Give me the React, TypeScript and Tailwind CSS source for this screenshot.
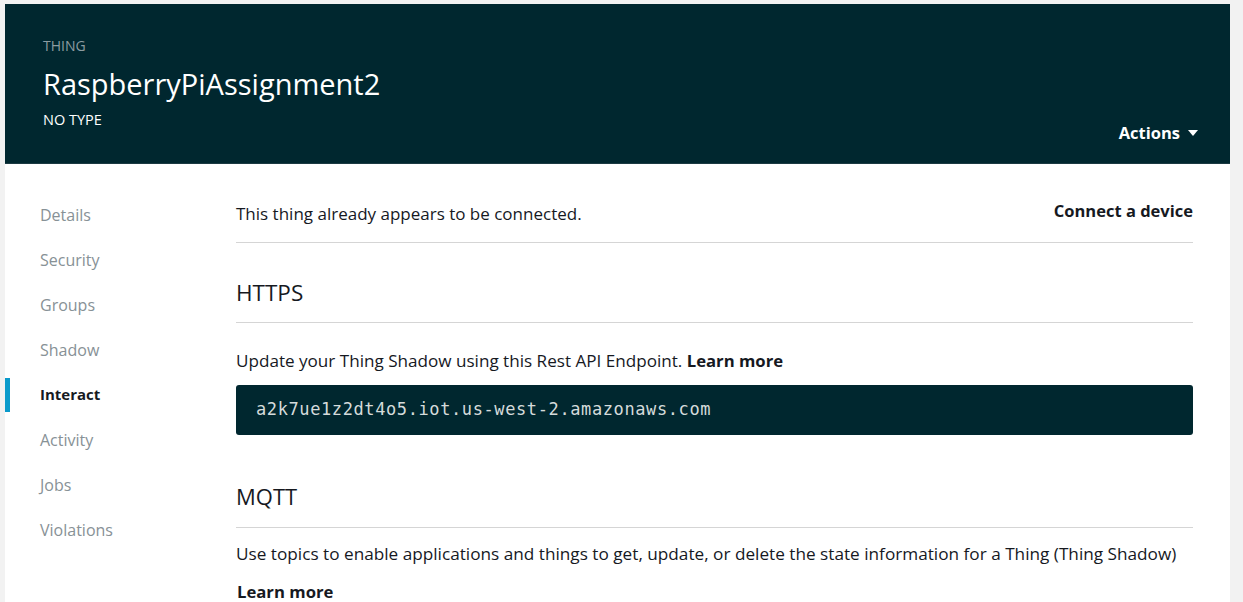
import React from "react";

const font = { fontFamily: '"Open Sans", Arial, sans-serif' };

const navItems = ["Details", "Security", "Groups", "Shadow", "Interact", "Activity", "Jobs", "Violations"];

export default function App() {
  return (
    <div className="w-[1243px] h-[602px] overflow-hidden bg-[#f2f2f2] pt-[4px] pl-[5px] pr-[13px]" style={font}>
      <header className="h-[159px] bg-[#00272f] flex justify-between pl-[38px] pr-[32px] text-white">
        <div className="flex flex-col pt-[33px]">
          <div className="text-[14px] leading-[18px] text-[#8d9ca1]">THING</div>
          <h1 className="text-[29px] leading-[36px] mt-[11px]">RaspberryPiAssignment2</h1>
          <div className="text-[14.5px] leading-[18px] mt-[9px]">NO TYPE</div>
        </div>
        <div className="self-end pb-[19px]">
          <button className="flex items-center gap-[8px] text-[16.5px] font-bold leading-[22px]">
            Actions
            <svg width="10" height="6" viewBox="0 0 10 6"><path d="M0 0h10L5 6z" fill="white" /></svg>
          </button>
        </div>
      </header>
      <div className="h-[439px] bg-white flex border-t border-[#1b3a42]">
        <nav className="w-[231px] flex flex-col pt-[28px]">
          {navItems.map((n) => (
            <div key={n} className="h-[45px] flex items-center relative">
              {n === "Interact" && <div className="absolute left-0 top-[6px] w-[5px] h-[34px] bg-[#0a9acb]" />}
              <span className={"pl-[35px] " + (n === "Interact" ? "text-[15px] font-bold text-[#16191f]" : "text-[16px] text-[#879196]")}>{n}</span>
            </div>
          ))}
        </nav>
        <main className="flex-1 pr-[37px] text-[#16191f]">
          <div className="flex justify-between items-end h-[79px] border-b border-[#d5d5d5]">
            <span className="text-[17px] leading-[22px] pb-[17px]">This thing already appears to be connected.</span>
            <span className="text-[16.5px] leading-[22px] font-bold pb-[20px]">Connect a device</span>
          </div>
          <div className="h-[80px] flex items-end pb-[14px] border-b border-[#d5d5d5]">
            <h2 className="text-[22.5px] leading-[30px]">HTTPS</h2>
          </div>
          <p className="text-[17.1px] mt-[27px] leading-[22px]">
            Update your Thing Shadow using this Rest API Endpoint. <b className="text-[16.7px]">Learn more</b>
          </p>
          <div className="mt-[13px] h-[50px] bg-[#00272f] rounded-[3px] flex items-center px-[20px] text-[17px] tracking-[0.6px] text-[#d5dbdb]" style={{ fontFamily: '"DejaVu Sans Mono", monospace' }}>
            a2k7ue1z2dt4o5.iot.us-west-2.amazonaws.com
          </div>
          <div className="h-[93px] flex items-end pb-[16px] border-b border-[#d5d5d5]">
            <h2 className="text-[22px] leading-[30px]">MQTT</h2>
          </div>
          <p className="text-[17.2px] mt-[15px] leading-[22px]">
            Use topics to enable applications and things to get, update, or delete the state information for a Thing (Thing Shadow)
          </p>
          <p className="text-[16.7px] mt-[16px] leading-[22px] font-bold pl-[1px]">Learn more</p>
        </main>
      </div>
    </div>
  );
}
